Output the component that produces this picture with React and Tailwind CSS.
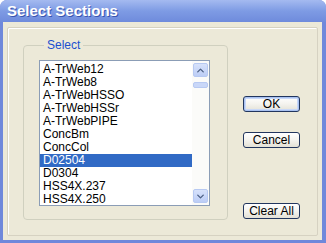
import { ChevronUp, ChevronDown } from 'lucide-react'

const items = [
  'A-TrWeb12',
  'A-TrWeb8',
  'A-TrWebHSSO',
  'A-TrWebHSSr',
  'A-TrWebPIPE',
  'ConcBm',
  'ConcCol',
  'D02504',
  'D0304',
  'HSS4X.237',
  'HSS4X.250',
]

const font = "font-['Liberation_Sans',Arial,sans-serif]"

function XpButton({ children, isDefault, className = '' }) {
  return (
    <button
      className={`block w-[57px] h-[16px] rounded-[3px] border border-[#22365e] bg-gradient-to-b from-white via-[#f4f3ee] to-[#e3e1d6] text-[12px] leading-none text-black ${font} ${
        isDefault ? 'shadow-[inset_0_0_0_1px_#a9c2f1,inset_0_0_0_2px_#c8d8f8]' : ''
      } ${className}`}
    >
      {children}
    </button>
  )
}

export default function App() {
  const selected = 'D02504'

  return (
    <div className="w-[326px] h-[243px] bg-[#6f88db] rounded-t-[7px] flex flex-col overflow-hidden">
      {/* barra de titulo */}
      <div className="h-[22px] shrink-0 px-[7px] flex items-center bg-gradient-to-b from-[#a4baf0] via-[#7e9be4] to-[#6f8bdc]">
        <span className="text-white font-bold text-[15px] font-['Liberation_Sans',Arial,sans-serif] [text-shadow:1px_1px_0_#3a55b0]">
          Select Sections
        </span>
      </div>

      {/* cuerpo */}
      <div className="flex-1 ml-[3px] mr-[4px] mb-[3px] bg-[#ece9d8] pt-[5px] px-[4px] pb-[4px] flex">
        <div className="flex-1 border border-[#d6d2c2] shadow-[inset_1px_1px_0_#fff] rounded-[2px] flex">
          <fieldset className="ml-[15px] mt-[11px] w-[205px] h-[181px] border border-[#d0d0bf] rounded-[4px] pl-[15px] pt-[2px]">
            <legend className={`ml-[5px] px-[3px] text-[12px] leading-[13px] text-[#1b4fcf] ${font}`}>
              Select
            </legend>
            <div className="mt-[6px] w-[171px] h-[146px] border border-[#8b9db6] bg-white flex">
              <div className="flex-1 pt-[2px] overflow-hidden">
                {items.map(it => (
                  <div
                    key={it}
                    className={`h-[13px] pl-[3px] text-[12px] leading-[13px] ${font} ${
                      it === selected ? 'bg-[#316ac5] text-white' : 'text-black'
                    }`}
                  >
                    {it}
                  </div>
                ))}
              </div>
              <div className="w-[17px] bg-[#fbfbf9] flex flex-col items-center justify-between py-[2px]">
                <div className="flex flex-col items-center">
                  <div className="w-[15px] h-[14px] rounded-[2px] border border-[#b7c9f2] bg-gradient-to-b from-[#d7e2fb] to-[#bccdf6] flex items-center justify-center">
                    <ChevronUp size={11} strokeWidth={3} className="text-[#4d6185]" />
                  </div>
                  <div className="mt-[5px] w-[15px] h-[6px] rounded-[2px] border border-[#b7c9f2] bg-[#c9d7f8]" />
                </div>
                <div className="w-[15px] h-[14px] rounded-[2px] border border-[#b7c9f2] bg-gradient-to-b from-[#d7e2fb] to-[#bccdf6] flex items-center justify-center">
                  <ChevronDown size={11} strokeWidth={3} className="text-[#4d6185]" />
                </div>
              </div>
            </div>
          </fieldset>

          <div className="ml-[15px] flex flex-col">
            <XpButton isDefault className="mt-[68px]">OK</XpButton>
            <XpButton className="mt-[20px]">Cancel</XpButton>
            <XpButton className="mt-[55px]">Clear All</XpButton>
          </div>
        </div>
      </div>
    </div>
  )
}
